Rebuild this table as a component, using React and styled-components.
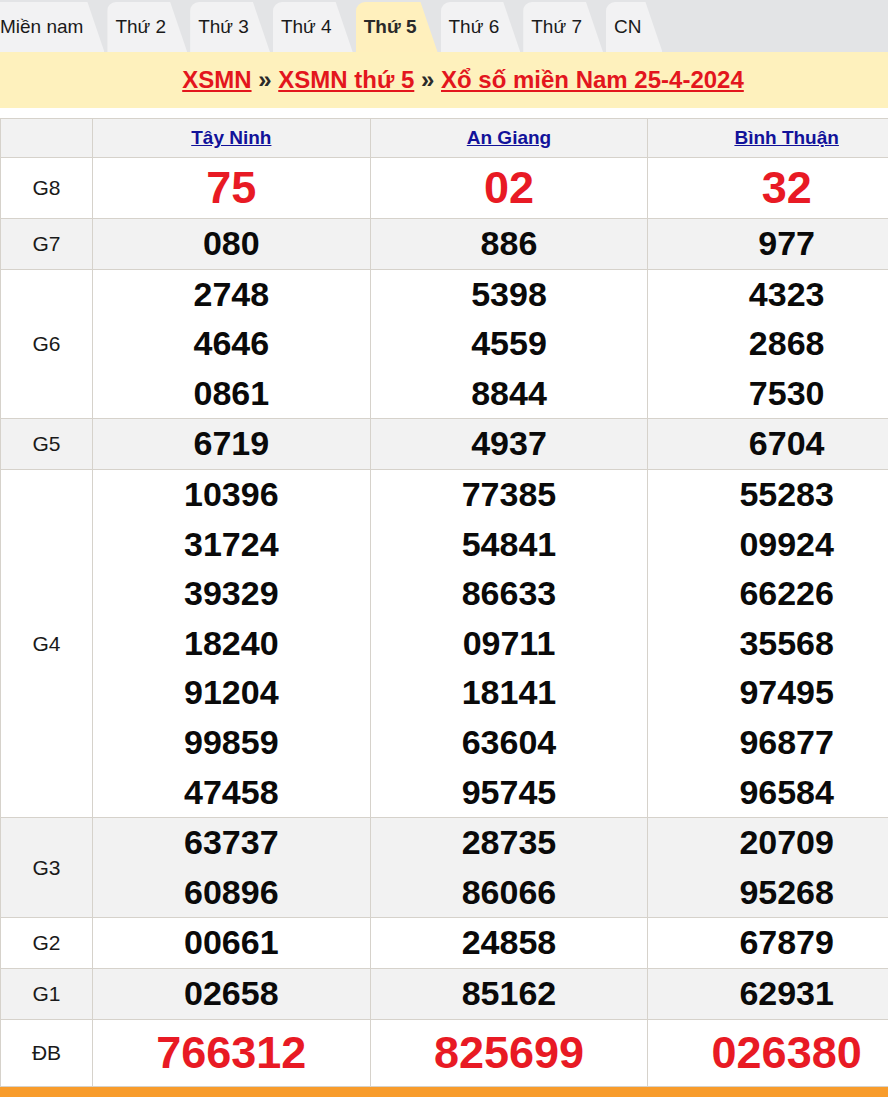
import React from "react";
import styled, { createGlobalStyle } from "styled-components";

const GlobalStyle = createGlobalStyle`
  html, body { margin: 0; padding: 0; background: #fff; }
  body {
    overflow-x: hidden;
    font-family: "Liberation Sans", Arial, sans-serif;
    color: #111;
  }
`;

const Page = styled.div`
  width: 926px;
`;

const TabBar = styled.nav`
  display: flex;
  align-items: flex-end;
  gap: 3px;
  height: 52px;
  background: #e3e4e6;
`;

const Tab = styled.a`
  display: block;
  height: 50px;
  line-height: 50px;
  padding: 0 21px 0 8px;
  font-size: 19px;
  font-weight: ${(p) => (p.$active ? 700 : 400)};
  color: ${(p) => (p.$active ? "#2a2a2a" : "#1a1a1a")};
  background: ${(p) => (p.$active ? "#fff0bd" : "#f2f2f3")};
  border-radius: 9px 6px 0 0;
  clip-path: polygon(0 0, calc(100% - 17px) 0, 100% 100%, 0 100%);
  white-space: nowrap;
  text-decoration: none;
  &:first-child { margin-left: -8px; }
`;

const TitleBand = styled.div`
  height: 56px;
  display: flex;
  align-items: center;
  justify-content: center;
  background: #fef1bd;
  font-size: 24px;
  font-weight: 700;
  color: #222;
  white-space: pre;
`;

const TitleLink = styled.a`
  color: #e3161d;
  text-decoration: underline;
  text-underline-offset: 2px;
  text-decoration-thickness: 2px;
`;

const Sep = styled.span`
  color: #2a2a2a;
`;

const Table = styled.table`
  margin-top: 10px;
  width: 926px;
  border-collapse: collapse;
  table-layout: fixed;
`;

const Row = styled.tr`
  background: ${(p) => (p.$shade ? "#f2f2f2" : "#ffffff")};
`;

const Cell = styled.td`
  border: 1px solid #d6d2cb;
  padding: 0;
  text-align: center;
  vertical-align: middle;
`;

const LabelCell = styled(Cell)`
  width: 91px;
  font-size: 21px;
  color: #1a1a1a;
`;

const HeadCell = styled(Cell)`
  height: 38px;
  font-size: 19px;
  font-weight: 700;
`;

const CityLink = styled.a`
  color: #12129a;
  text-decoration: underline;
`;

const Num = styled.div`
  font-weight: 700;
  font-size: ${(p) => (p.$big ? "45px" : "34px")};
  line-height: ${(p) => p.$lh || "49.6px"};
  color: ${(p) => (p.$big ? "#e81a24" : "#0a0a0a")};
`;

const Footer = styled.div`
  height: 30px;
  background: #f89c2c;
`;

const tabs = ["Miền nam", "Thứ 2", "Thứ 3", "Thứ 4", "Thứ 5", "Thứ 6", "Thứ 7", "CN"];
const cities = ["Tây Ninh", "An Giang", "Bình Thuận"];

const prizes = [
  { label: "G8", big: true, lh: "60px", cols: [["75"], ["02"], ["32"]] },
  { label: "G7", cols: [["080"], ["886"], ["977"]] },
  {
    label: "G6",
    cols: [
      ["2748", "4646", "0861"],
      ["5398", "4559", "8844"],
      ["4323", "2868", "7530"],
    ],
  },
  { label: "G5", cols: [["6719"], ["4937"], ["6704"]] },
  {
    label: "G4",
    cols: [
      ["10396", "31724", "39329", "18240", "91204", "99859", "47458"],
      ["77385", "54841", "86633", "09711", "18141", "63604", "95745"],
      ["55283", "09924", "66226", "35568", "97495", "96877", "96584"],
    ],
  },
  {
    label: "G3",
    cols: [
      ["63737", "60896"],
      ["28735", "86066"],
      ["20709", "95268"],
    ],
  },
  { label: "G2", cols: [["00661"], ["24858"], ["67879"]] },
  { label: "G1", cols: [["02658"], ["85162"], ["62931"]] },
  { label: "ĐB", big: true, lh: "66px", cols: [["766312"], ["825699"], ["026380"]] },
];

export default function App() {
  return (
    <Page>
      <GlobalStyle />
      <TabBar>
        {tabs.map((t) => (
          <Tab key={t} $active={t === "Thứ 5"}>
            {t}
          </Tab>
        ))}
      </TabBar>
      <TitleBand>
        <TitleLink>XSMN</TitleLink>
        <Sep> » </Sep>
        <TitleLink>XSMN thứ 5</TitleLink>
        <Sep> » </Sep>
        <TitleLink>Xổ số miền Nam 25-4-2024</TitleLink>
      </TitleBand>
      <Table>
        <tbody>
          <Row $shade>
            <HeadCell style={{ width: 91 }} />
            {cities.map((c) => (
              <HeadCell key={c}>
                <CityLink>{c}</CityLink>
              </HeadCell>
            ))}
          </Row>
          {prizes.map((p, i) => (
            <Row key={p.label} $shade={i % 2 === 1}>
              <LabelCell>{p.label}</LabelCell>
              {p.cols.map((nums, j) => (
                <Cell key={j}>
                  {nums.map((n, k) => (
                    <Num key={k} $big={p.big} $lh={p.lh}>
                      {n}
                    </Num>
                  ))}
                </Cell>
              ))}
            </Row>
          ))}
        </tbody>
      </Table>
      <Footer />
    </Page>
  );
}
